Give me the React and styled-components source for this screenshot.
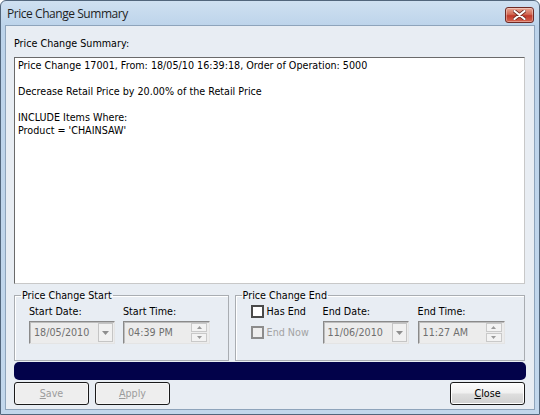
import React from 'react';
import styled, { createGlobalStyle } from 'styled-components';

const GlobalStyle = createGlobalStyle`
  html, body {
    margin: 0;
    padding: 0;
    background: #ffffff;
  }
  body {
    font-family: "DejaVu Sans", Verdana, sans-serif;
    font-size: 9.6px;
    color: #000;
  }
`

const Window = styled.div`
  width: 540px;
  height: 415px;
  box-sizing: border-box;
  border: 1px solid #52667c;
  border-radius: 6px 6px 0 0;
  background: linear-gradient(#cfe0f1, #bcd3ea 26px, #c2d7ec);
  padding: 0 4px 4px;
  display: flex;
  flex-direction: column;
`
const TitleBar = styled.div`
  height: 24px;
  display: flex;
  align-items: center;
  justify-content: space-between;
  padding-left: 2px;
`
const Title = styled.span`
  font-family: "Open Sans", "Noto Sans", sans-serif;
  font-size: 12px;
  letter-spacing: -0.45px;
  color: #1e1e1e;
`
const CloseX = styled.div`
  width: 29px;
  height: 16px;
  margin-right: 1px;
  margin-top: 3px;
  box-sizing: border-box;
  border: 1px solid #6e2a25;
  border-radius: 3px;
  background: linear-gradient(#e8a593, #d26a55 45%, #c0392b 55%, #d4654f);
  box-shadow: inset 0 0 0 1px rgba(255, 255, 255, 0.35);
  display: flex;
  align-items: center;
  justify-content: center;
`
const Client = styled.div`
  flex: 1;
  border: 1px solid #8ea4bb;
  background: #e8edf3;
  padding: 11px 8px 4px 8px;
  display: flex;
  flex-direction: column;
`
const Caption = styled.div`
  line-height: 13px;
  height: 13px;
  color: ${p => (p.$disabled ? '#a0a0a0' : '#000')};
  white-space: nowrap;
`
const Memo = styled.div`
  margin-top: 7px;
  margin-right: 1px;
  height: 227px;
  box-sizing: border-box;
  background: #fff;
  border: 1px solid;
  border-color: #6a6a6a #c8c8c8 #c8c8c8 #6a6a6a;
  padding: 1px 3px;
  line-height: 13px;
  white-space: pre;
`
const GroupRow = styled.div`
  margin-top: 5px;
  display: flex;
  gap: 6px;
  margin-right: 1px;
`
const Group = styled.fieldset`
  margin: 0;
  min-width: 0;
  width: ${p => p.$width}px;
  box-sizing: border-box;
  height: 72px;
  border: 1px solid #a9adb2;
  box-shadow: inset 1px 1px 0 #fff;
  padding: 3px 0 0 ${p => p.$pad}px;
  display: grid;
  grid-template-columns: ${p => p.$cols};
  grid-template-rows: 13px 23px;
  row-gap: 3px;
  align-content: start;
`
const Legend = styled.legend`
  padding: 0 1px;
  margin-left: ${p => p.$shift}px;
  line-height: 13px;
`
const Combo = styled.div`
  width: ${p => p.$width}px;
  height: 23px;
  box-sizing: border-box;
  border: 1px solid;
  border-color: #8a8a8a #e4e4e4 #e4e4e4 #8a8a8a;
  box-shadow: inset 1px 1px 0 #bdbdbd;
  background: #ececec;
  display: flex;
  align-items: center;
  justify-content: space-between;
  padding: 0 1px 0 4px;
  color: #6f6f6f;
`
const DropButton = styled.div`
  width: 15px;
  height: 19px;
  box-sizing: border-box;
  border: 1px solid #c5c5c5;
  background: #f1f1f1;
  display: flex;
  align-items: center;
  justify-content: center;
`
const Spin = styled.div`
  display: flex;
  flex-direction: column;
  gap: 1px;
  margin-right: 1px;
`
const SpinButton = styled.div`
  width: 16px;
  height: 9px;
  box-sizing: border-box;
  border: 1px solid #c9c9c9;
  background: #f3f3f3;
  display: flex;
  align-items: center;
  justify-content: center;
`
const CheckRow = styled.label`
  display: flex;
  align-items: center;
  gap: 3px;
  color: ${p => (p.$disabled ? '#a3a3a3' : '#000')};
  align-self: ${p => (p.$top ? 'end' : 'center')};
  white-space: nowrap;
`
const Box = styled.span`
  width: 13px;
  height: 13px;
  box-sizing: border-box;
  border: 2px solid ${p => (p.$disabled ? '#8c8c8c' : '#4a4a4a')};
  background: ${p => (p.$disabled ? '#eeeeee' : '#fff')};
`
const Progress = styled.div`
  margin-top: 1px;
  height: 18px;
  border-radius: 5px;
  background: #02024a;
`
const ButtonBar = styled.div`
  margin-top: 2px;
  display: flex;
  gap: 6px;
  margin-right: 1px;
`
const Button = styled.button`
  width: 75px;
  height: 23px;
  box-sizing: border-box;
  border: 1px solid #1a1a1a;
  border-radius: 3px;
  font-family: inherit;
  font-size: inherit;
  padding: 0;
  color: ${p => (p.disabled ? '#9c9c9c' : '#000')};
  background: ${p =>
    p.disabled
      ? '#eeeeee'
      : 'linear-gradient(#fcfcfc, #f0f0f0 48%, #dedede 52%, #d0d0d0)'};
  box-shadow: inset 0 0 0 1px ${p => (p.disabled ? '#f7f7f7' : '#ffffff')};
  margin-left: ${p => (p.$push ? 'auto' : '0')};
  u {
    text-decoration: underline;
  }
`

const Arrow = ({ up, color = '#8e8e8e' }) => (
  <svg width="7" height="4" viewBox="0 0 7 4">
    <path d={up ? 'M0 4 L3.5 0 L7 4 Z' : 'M0 0 L7 0 L3.5 4 Z'} fill={color} />
  </svg>
)

const SmallArrow = ({ up }) => (
  <svg width="5" height="3" viewBox="0 0 5 3">
    <path d={up ? 'M0 3 L2.5 0 L5 3 Z' : 'M0 0 L5 0 L2.5 3 Z'} fill="#9a9a9a" />
  </svg>
)

const DateBox = ({ value }) => (
  <Combo $width={86}>
    <span>{value}</span>
    <DropButton><Arrow /></DropButton>
  </Combo>
)

const TimeBox = ({ value }) => (
  <Combo $width={87}>
    <span>{value}</span>
    <Spin>
      <SpinButton><SmallArrow up /></SpinButton>
      <SpinButton><SmallArrow /></SpinButton>
    </Spin>
  </Combo>
)

const summary = `Price Change 17001, From: 18/05/10 16:39:18, Order of Operation: 5000

Decrease Retail Price by 20.00% of the Retail Price

INCLUDE Items Where:
Product = 'CHAINSAW'`

export default function App() {
  return (
    <>
      <GlobalStyle />
      <Window>
        <TitleBar>
          <Title>Price Change Summary</Title>
          <CloseX>
            <svg width="13" height="10" viewBox="0 0 13 10">
              <path
                d="M1.5 1 L11.5 9 M11.5 1 L1.5 9"
                stroke="#6b2a22"
                strokeWidth="3.6"
                strokeLinecap="round"
              />
              <path
                d="M1.5 1 L11.5 9 M11.5 1 L1.5 9"
                stroke="#ffffff"
                strokeWidth="2.2"
                strokeLinecap="round"
              />
            </svg>
          </CloseX>
        </TitleBar>
        <Client>
          <Caption>Price Change Summary:</Caption>
          <Memo>{summary}</Memo>
          <GroupRow>
            <Group $width={215} $pad={14} $cols="94px 87px">
              <Legend $shift={-8}>Price Change Start</Legend>
              <Caption>Start Date:</Caption>
              <Caption>Start Time:</Caption>
              <DateBox value="18/05/2010" />
              <TimeBox value="04:39 PM" />
            </Group>
            <Group $width={291} $pad={15} $cols="72px 95px 87px">
              <Legend $shift={-9}>Price Change End</Legend>
              <CheckRow $top>
                <Box />
                Has End
              </CheckRow>
              <Caption>End Date:</Caption>
              <Caption>End Time:</Caption>
              <CheckRow $disabled>
                <Box $disabled />
                End Now
              </CheckRow>
              <DateBox value="11/06/2010" />
              <TimeBox value="11:27 AM" />
            </Group>
          </GroupRow>
          <Progress />
          <ButtonBar>
            <Button disabled><u>S</u>ave</Button>
            <Button disabled><u>A</u>pply</Button>
            <Button $push><u>C</u>lose</Button>
          </ButtonBar>
        </Client>
      </Window>
    </>
  )
}
